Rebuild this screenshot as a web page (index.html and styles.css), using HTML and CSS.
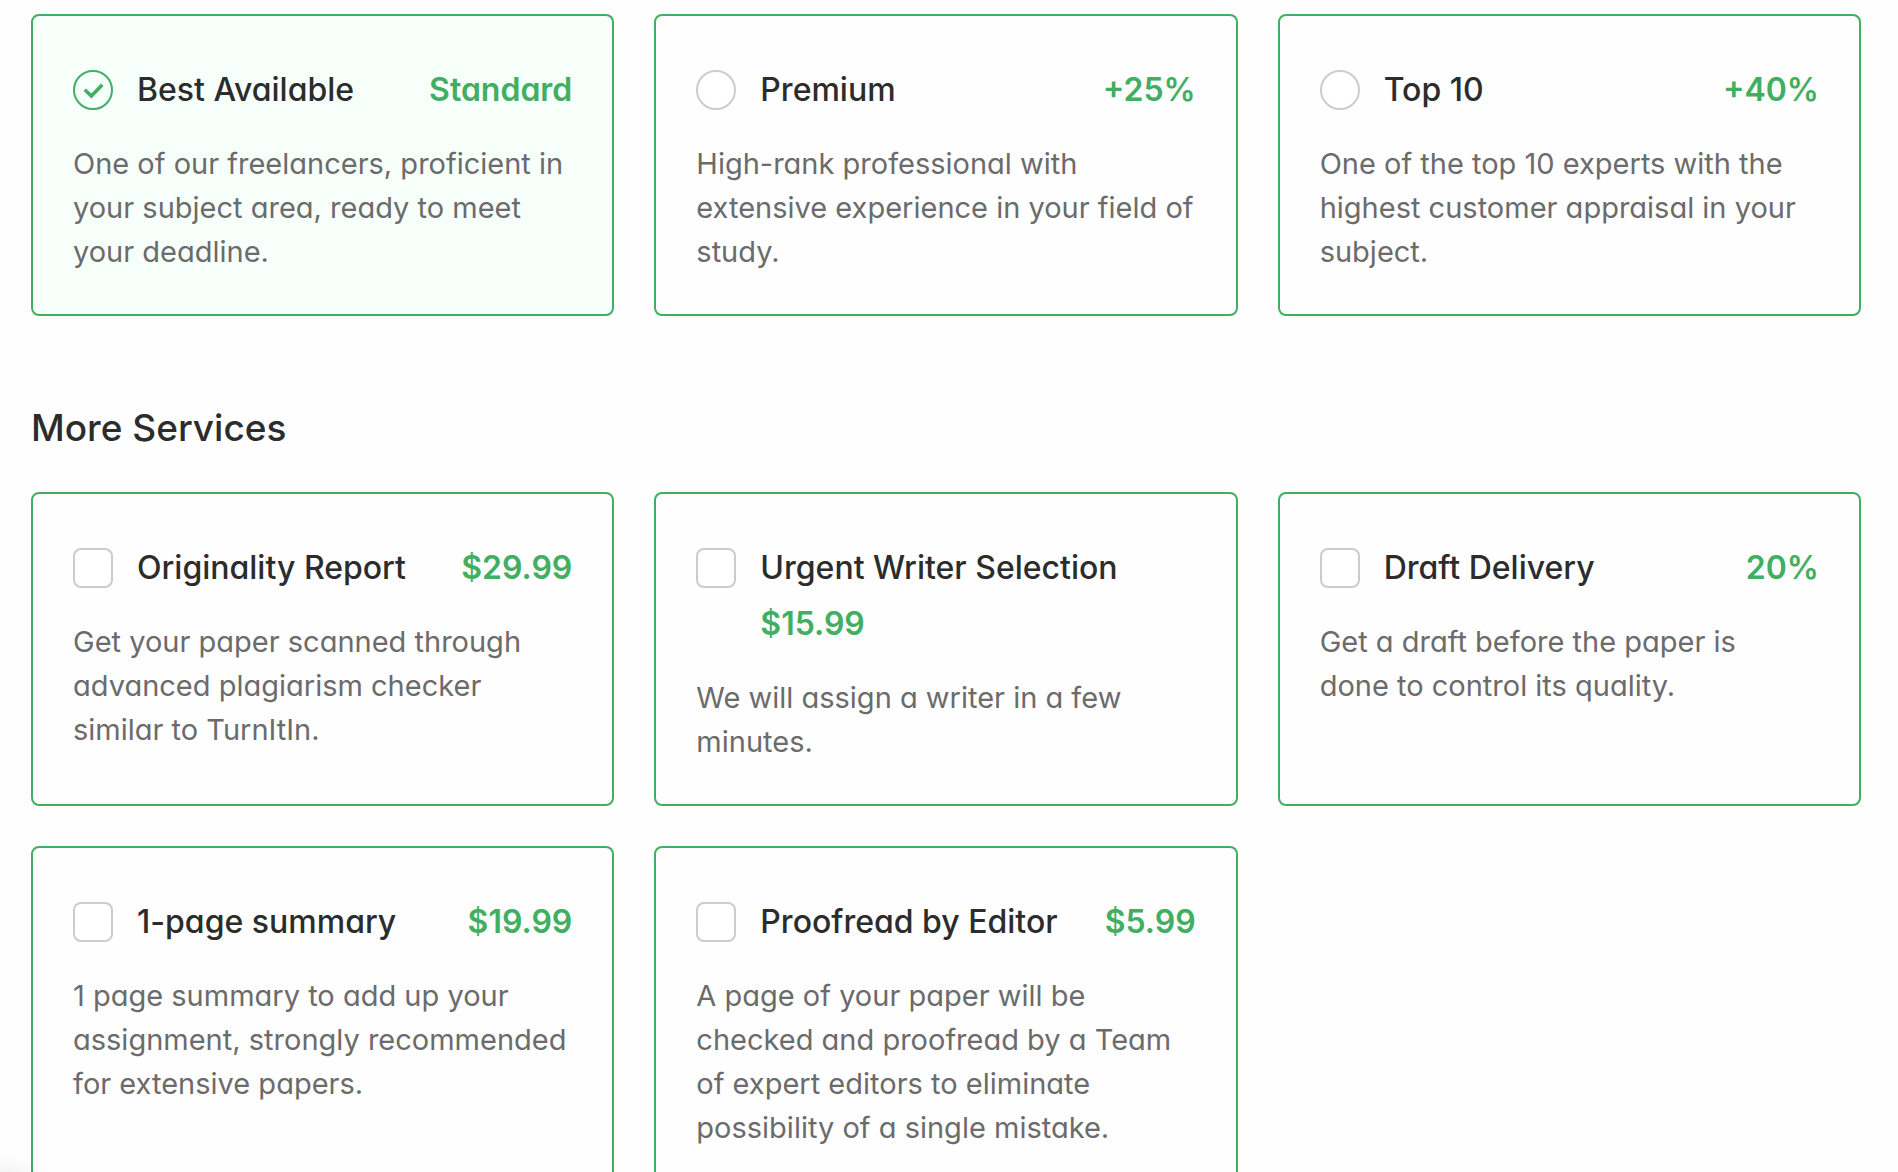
FILE: index.html
```html
<!DOCTYPE html>
<html lang="en">
<head>
    <meta charset="UTF-8">
    <meta name="viewport" content="width=device-width, initial-scale=1.0">
    <title>Order options</title>
    <link rel="stylesheet" href="styles.css">
</head>
<body>
    <form class="container" action="" method="post">

        <!-- writer category -->
        <div class="cards">
            <div class="card active">
                <div class="card-head">
                    <span class="control">
                        <input type="radio" name="writer" id="best" value="best" checked>
                        <svg class="tick" viewBox="0 0 40 40" aria-hidden="true"><path d="M11.8 19.8l6.6 6.2L29.3 14.8" fill="none" stroke="#41ae61" stroke-width="3.6"/></svg>
                    </span>
                    <label class="card-title" for="best">
                        <span class="name">Best Available</span>
                        <span class="price">Standard</span>
                    </label>
                </div>
                <p>One of our freelancers, proficient in your subject area, ready to meet your deadline.</p>
            </div>

            <div class="card">
                <div class="card-head">
                    <input type="radio" name="writer" id="premium" value="premium">
                    <label class="card-title" for="premium">
                        <span class="name">Premium</span>
                        <span class="price">+25%</span>
                    </label>
                </div>
                <p>High-rank professional with extensive experience in your field of study.</p>
            </div>

            <div class="card">
                <div class="card-head">
                    <input type="radio" name="writer" id="top" value="top">
                    <label class="card-title" for="top">
                        <span class="name">Top 10</span>
                        <span class="price">+40%</span>
                    </label>
                </div>
                <p>One of the top 10 experts with the highest customer appraisal in your subject.</p>
            </div>
        </div>

        <h2>More Services</h2>

        <!-- extra services -->
        <div class="cards">
            <div class="card">
                <div class="card-head">
                    <input type="checkbox" name="originality" id="originality">
                    <label class="card-title" for="originality">
                        <span class="name">Originality Report</span>
                        <span class="price">$29.99</span>
                    </label>
                </div>
                <p>Get your paper scanned through advanced plagiarism checker similar to TurnItIn.</p>
            </div>

            <div class="card">
                <div class="card-head">
                    <input type="checkbox" name="urgent" id="urgent">
                    <label class="card-title" for="urgent">
                        <span class="name">Urgent Writer Selection</span>
                        <span class="price">$15.99</span>
                    </label>
                </div>
                <p>We will assign a writer in a few minutes.</p>
            </div>

            <div class="card">
                <div class="card-head">
                    <input type="checkbox" name="draft" id="draft">
                    <label class="card-title" for="draft">
                        <span class="name">Draft Delivery</span>
                        <span class="price">20%</span>
                    </label>
                </div>
                <p>Get a draft before the paper is <br>done to control its quality.</p>
            </div>

            <div class="card">
                <div class="card-head">
                    <input type="checkbox" name="summary" id="summary">
                    <label class="card-title" for="summary">
                        <span class="name">1-page summary</span>
                        <span class="price">$19.99</span>
                    </label>
                </div>
                <p>1 page summary to add up your assignment, strongly recommended for extensive papers.</p>
            </div>

            <div class="card">
                <div class="card-head">
                    <input type="checkbox" name="proofread" id="proofread">
                    <label class="card-title" for="proofread">
                        <span class="name">Proofread by Editor</span>
                        <span class="price">$5.99</span>
                    </label>
                </div>
                <p>A page of your paper will be checked and proofread by a Team of expert editors to eliminate possibility of a single mistake.</p>
            </div>
        </div>
    </form>
</body>
</html>
```
FILE: styles.css
```css
*{
    box-sizing: border-box;
}
body{
    margin: 0;
    background-color: #fefefe;
    color: #2c2c2c;
    font-family: Inter, Lato, sans-serif;
    font-feature-settings: "cv11";
}
/* soft shadow in the bottom left corner */
body::after{
    content: "";
    position: fixed;
    left: -20px;
    bottom: -40px;
    width: 50px;
    height: 30px;
    border-radius: 15px;
    box-shadow: 0 0 30px rgba(0, 0, 0, 0.2);
}
.container{
    padding: 14px 37px 40px 31px;
}
.cards{
    display: grid;
    grid-template-columns: repeat(3, 1fr);
    gap: 40px;
}
.card{
    padding: 46px 40px 40px;
    border: 2px solid #41ae61;
    border-radius: 8px;
}
.card.active{
    background-color: #f7fffb;
}
.card-head{
    display: flex;
    align-items: flex-start;
    gap: 24px;
    margin-bottom: 24px;
}
.card-title{
    flex: 1;
    display: flex;
    flex-wrap: wrap;
    justify-content: space-between;
    font-size: 32px;
    font-weight: 500;
    line-height: 56px;
}
.price{
    color: #41ae61;
    font-weight: 600;
}
.card p{
    margin: 0;
    color: #6b6b6b;
    font-size: 29px;
    line-height: 44px;
}
h2{
    margin: 88px 0 40px;
    font-size: 37px;
    font-weight: 500;
    line-height: 48px;
}
input{
    appearance: none;
    flex: none;
    display: block;
    width: 40px;
    height: 40px;
    margin: 8px 0;
    border: 2px solid #ccc;
    border-radius: 8px;
    background-color: white;
}
input[type="radio"]{
    border-radius: 50%;
}
input:checked{
    border-color: #41ae61;
    background-color: #f7fffb;
}
.control{
    display: grid;
    align-items: center;
}
.control input, .tick{
    grid-area: 1 / 1;
}
.tick{
    width: 40px;
    height: 40px;
    pointer-events: none;
}
```
